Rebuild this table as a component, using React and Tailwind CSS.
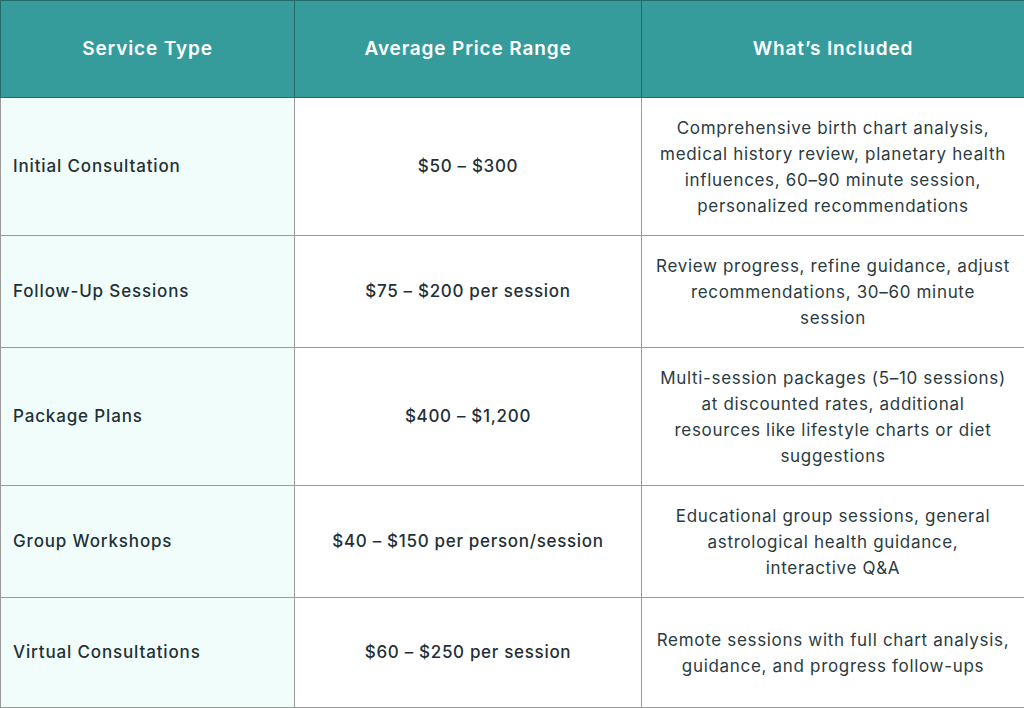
const rows = [
  {
    service: 'Initial Consultation',
    price: '$50 – $300',
    included: [
      'Comprehensive birth chart analysis,',
      'medical history review, planetary health',
      'influences, 60–90 minute session,',
      'personalized recommendations',
    ],
    h: 'h-[138px]',
  },
  {
    service: 'Follow-Up Sessions',
    price: '$75 – $200 per session',
    included: ['Review progress, refine guidance, adjust', 'recommendations, 30–60 minute', 'session'],
    h: 'h-[112px]',
  },
  {
    service: 'Package Plans',
    price: '$400 – $1,200',
    included: [
      'Multi-session packages (5–10 sessions)',
      'at discounted rates, additional',
      'resources like lifestyle charts or diet',
      'suggestions',
    ],
    h: 'h-[138px]',
  },
  {
    service: 'Group Workshops',
    price: '$40 – $150 per person/session',
    included: ['Educational group sessions, general', 'astrological health guidance,', 'interactive Q&A'],
    h: 'h-[112px]',
  },
  {
    service: 'Virtual Consultations',
    price: '$60 – $250 per session',
    included: ['Remote sessions with full chart analysis,', 'guidance, and progress follow-ups'],
    h: 'h-[110px]',
  },
];

export default function App() {
  return (
    <div className="w-[1024px] h-[708px] bg-white font-['Inter',sans-serif] text-[#1f3138]">
      <table className="w-[1024px] table-fixed border-collapse">
        <colgroup>
          <col className="w-[294px]" />
          <col className="w-[347px]" />
          <col className="w-[383px]" />
        </colgroup>
        <thead>
          <tr className="h-[97px] bg-[#359c9b] text-white">
            <th className="border border-[#246a68] text-[19px] font-semibold tracking-[0.045em]">Service Type</th>
            <th className="border border-[#246a68] text-[19px] font-semibold tracking-[0.045em]">Average Price Range</th>
            <th className="border border-[#246a68] text-[19px] font-semibold tracking-[0.045em]">What’s Included</th>
          </tr>
        </thead>
        <tbody>
          {rows.map((r) => (
            <tr key={r.service} className={r.h}>
              <td className="border border-[#9a9a9a] bg-[#f0fdfa] pl-3 text-[17px] font-medium tracking-[0.05em]">{r.service}</td>
              <td className="border border-[#9a9a9a] text-center text-[17px] font-medium tracking-[0.04em]">{r.price}</td>
              <td className="border border-[#9a9a9a] px-2 text-center text-[17px] leading-[26px] tracking-[0.04em] text-[#2a3b42] whitespace-nowrap">
                {r.included.map((line, i) => (
                  <div key={i}>{line}</div>
                ))}
              </td>
            </tr>
          ))}
        </tbody>
      </table>
    </div>
  );
}
